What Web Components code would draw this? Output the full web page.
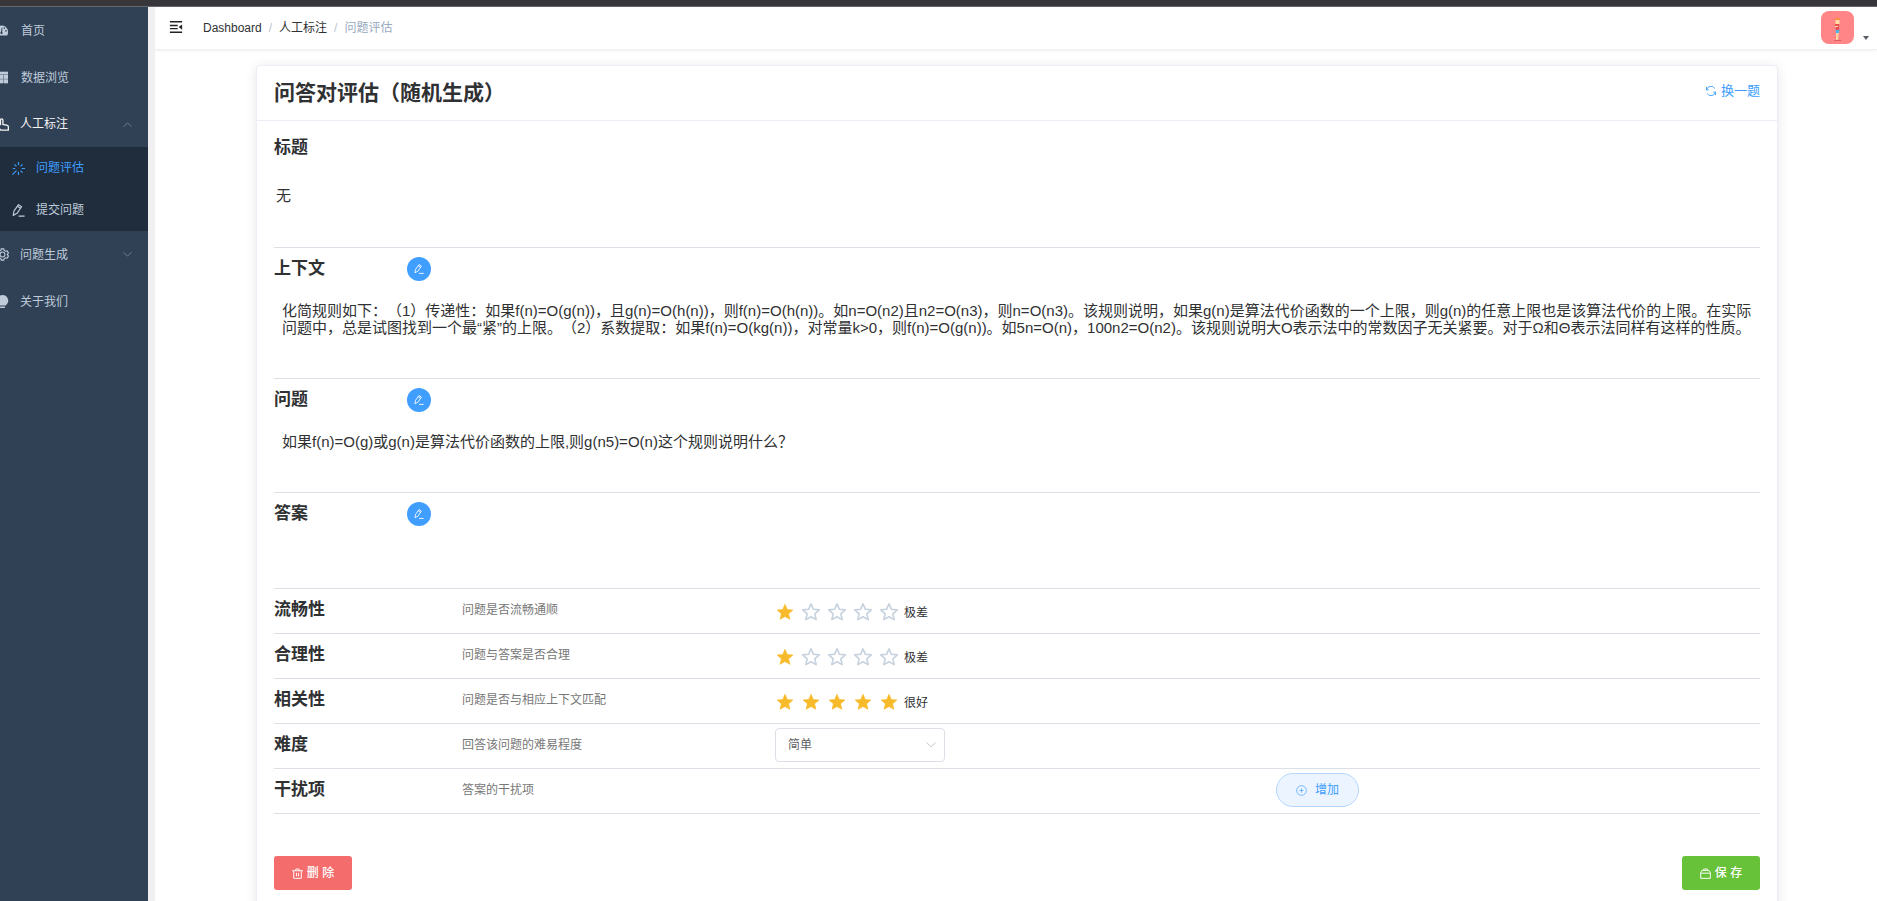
<!DOCTYPE html>
<html lang="zh-CN">
<head>
<meta charset="utf-8">
<title>问题评估</title>
<style>
html,body{margin:0;height:100%}
body{font:12px/16px "Liberation Sans","Noto Sans CJK SC",sans-serif;color:#303133;background:#fff;overflow:hidden}
</style>
</head>
<body>
<app-shell></app-shell>
<script>
const svg = (body, size) => `<svg width="${size}" height="${size}" viewBox="0 0 16 16" fill="none" stroke="currentColor" stroke-width="1" aria-hidden="true">${body}</svg>`;
const ICONS = {
  gauge: '<path fill="currentColor" stroke="none" fill-rule="evenodd" d="M8 2a8 8 0 0 0-7 12h14A8 8 0 0 0 8 2zM3 9.500a1 1 0 1 1 0-2 1 1 0 0 1 0 2zm2-3.500a1 1 0 1 1 0-2 1 1 0 0 1 0 2zm3 6.500a1.600 1.600 0 0 1-.6-3L8.200 4.500l1 .2-.4 5a1.600 1.600 0 0 1-.8 2.800zm3.500-6.500a1 1 0 1 1 0-2 1 1 0 0 1 0 2zm2 3.500a1 1 0 1 1 0-2 1 1 0 0 1 0 2z"/>',
  table: '<path fill="currentColor" stroke="none" fill-opacity=".45" d="M0 1h16v14H0z"/><path fill="currentColor" stroke="none" d="M0 1h16v3H0zM0 5h4.500v4.500H0zM5.500 5h4.500v4.500H5.500zM11 5h5v4.500h-5zM0 10.500h4.500V15H0zM5.500 10.500h4.500V15H5.500zM11 10.500h5V15h-5z"/>',
  hand: '<path stroke-width="1.600" d="M5.500 9V2.500a1.500 1.500 0 0 1 3 0V8l5.500 1.200c1 .3 1.200 1 1.200 2V15H6L2 10.500"/>',
  loading: '<path stroke-width="1.400" d="M8 0v4M8 12v4M1 8h3M12 8h4M3 3l2.500 2.500M10.500 10.500L13 13M13 3l-2.500 2.500M5.500 10.500L.5 15.500"/>',
  edit: '<path stroke-width="1.400" stroke-linejoin="round" d="M1.500 14l1-5.500L8 .8l3.800 2.600L6.200 11.500zM6.800 2.800l3.600 2.500M8 15h7.500"/>',
  gear: '<circle cx="8" cy="8" r="3" stroke-width="1.300"/><path stroke-width="1.400" d="M6.500 1h3l.6 2 1.700 1 2-.5 1.500 2.600L13.900 8l1.400 1.900-1.500 2.600-2-.5-1.700 1-.6 2h-3l-.6-2-1.700-1-2 .5L.7 9.900 2.100 8 .7 6.100l1.500-2.600 2 .5 1.700-1z"/>',
  bulb: '<path fill="currentColor" stroke="none" d="M8 0a7 7 0 0 0-4.200 12.600V13h8.400v-.4A7 7 0 0 0 8 0zM5 14h6v2H5z"/>',
  up: '<path stroke-width="1.300" d="M1 12l7-7 7 7"/>',
  down: '<path stroke-width="1.300" d="M1 4l7 7 7-7"/>',
  refresh: '<path stroke-width="1.200" d="M2 7a6 6 0 0 1 11-2.500M14 9a6 6 0 0 1-11 2.500M2 2.500v4h3M14 13.500v-4h-3"/>',
  plus: '<circle cx="8" cy="8" r="7"/><path d="M8 5v6M5 8h6"/>',
  trash: '<path stroke-width="1.400" d="M0 4h16M5.500 4V1.500h5V4M2.500 4v11h11V4M6.500 7v5M9.500 7v5"/>',
  box: '<path stroke-width="1.400" d="M4.500 3.500l1-2h5l1 2M3 3.500h10l2 3V15H1V6.500zM1 7.500h14"/>',
  fold: '<path stroke-width="1.600" d="M1 2h14M1 6.200h9M1 9.800h9M1 14h14"/><path fill="currentColor" stroke="none" d="M15 5v6l-4-3z"/>',
  starOn: '<path fill="#f7ba2a" stroke="#f7ba2a" stroke-width=".6" stroke-linejoin="round" d="M8 1.200l2 4.600 5 .5-3.800 3.300 1.100 4.900L8 12l-4.300 2.500 1.100-4.900L1 6.300l5-.5z"/>',
  starOff: '<path stroke="#c6d1de" stroke-width="1.400" stroke-linejoin="round" d="M8 .8l2.200 4.800 5.200.5-4 3.500 1.200 5.200L8 12.200l-4.600 2.600 1.200-5.200-4-3.500 5.200-.5z"/>'
};

const define = (name, css, render) => customElements.define(name, class extends HTMLElement {
  constructor() {
    super();
    this.attachShadow({ mode: 'open' });
  }
  connectedCallback() {
    this.shadowRoot.innerHTML = `<style>*{box-sizing:border-box}svg{display:block;flex:none}${css}</style>${render(this)}`;
  }
});

define('nav-item', `
:host{display:block}
a{display:flex;align-items:center;height:47px;padding-right:16px;color:#bfcbd9;text-decoration:none}
.icon{width:20px;display:flex;margin-left:-4px;margin-right:4px}
.chev{margin-left:auto;color:#8592a3}
:host([root]) .icon{margin-left:-5px;margin-right:6px}
:host([open]) a{color:#f4f4f5;height:46px}
:host([sub]) a{height:42px;padding-left:12px}
:host([sub]) .icon{margin-left:0}
:host([current]) a{color:#409eff}
`, el => `<a href="#"><span class="icon">${svg(ICONS[el.getAttribute('icon')], 13)}</span><slot></slot>${el.hasAttribute('chevron') ? `<span class="chev">${svg(ICONS[el.getAttribute('chevron')], 9)}</span>` : ''}</a>`);

define('side-bar', `
:host{display:block;background:#304156}
.sub{background:#1f2d3d}
`, () => `<nav>
<nav-item icon="gauge" root>首页</nav-item>
<nav-item icon="table" root>数据浏览</nav-item>
<nav-item icon="hand" chevron="up" open>人工标注</nav-item>
<div class="sub"><nav-item icon="loading" sub current>问题评估</nav-item><nav-item icon="edit" sub>提交问题</nav-item></div>
<nav-item icon="gear" chevron="down">问题生成</nav-item>
<nav-item icon="bulb">关于我们</nav-item></nav>`);

define('nav-bar', `
:host{display:flex;align-items:center;height:43px;padding:0 8px 0 14px;border-bottom:1px solid #f0f0f0;box-shadow:0 1px 3px rgba(0,21,41,.06)}
button{border:0;background:none;padding:0 0 2px;color:inherit}
.fold{color:#222;margin-right:20px}
ol{display:flex;list-style:none;margin:0;padding:0}
li+li::before{content:"/";color:#c0c4cc;margin:0 7px}
a{color:#303133;text-decoration:none}
li:last-child{color:#97a8be}
.user{margin-left:auto;display:flex;align-items:flex-end;gap:9px}
.caret{border:3px solid transparent;border-top:4px solid #5a5e66;border-bottom:0;margin-bottom:4px}
`, () => `<button class="fold" aria-label="收起菜单">${svg(ICONS.fold, 14)}</button>
<ol><li><a href="#">Dashboard</a></li><li><a href="#">人工标注</a></li><li>问题评估</li></ol>
<button class="user" aria-label="用户菜单"><svg width="33" height="33" viewBox="0 0 33 33" aria-hidden="true"><rect width="33" height="33" rx="8" fill="#ff8587"/><path d="M13 29h7v1h-7z" fill="#d95f63"/><path d="M15 21h3l-1 8h-2z" fill="#fbd0a0"/><path d="M14.500 18h4l-.5 4h-3z" fill="#4cb4e8"/><path d="M14 13h4v6h-3z" fill="#e84d50"/><path d="M14.500 8h4v5h-4z" fill="#ffdca8"/><path d="M14 8q2-3 5 0v1h-5z" fill="#f5923e"/><path d="M14 15h3v1h-3z" fill="#ffdca8"/></svg><span class="caret"></span></button>`);

define('text-section', `
:host{display:block;border-bottom:1px solid #dcdfe6;min-height:var(--h);padding-top:9px}
header{display:flex;align-items:center;height:24px}
h3{margin:0;font-size:17px;line-height:24px;width:133px}
button{width:24px;height:24px;border:0;border-radius:50%;background:#409eff;color:#fff;padding:0;display:grid;place-items:center}
div{margin-top:21px;padding:0 8px;font-size:15px;line-height:17px;text-spacing-trim:space-all}
:host([plain]) div{padding:0 2px;margin-top:27px}
`, el => `<header><h3>${el.getAttribute('label')}</h3>${el.hasAttribute('plain') ? '' : `<button aria-label="编辑${el.getAttribute('label')}">${svg(ICONS.edit, 10)}</button>`}</header><div><slot></slot></div>`);

define('score-row', `
:host{display:grid;grid-template-columns:188fr 313fr 985fr;height:45px;border-bottom:1px solid #dcdfe6;align-items:start}
h3{margin:0;font-size:17px;line-height:24px;padding-top:9px}
p{margin:0;color:#777;padding-top:13px}
`, el => `<h3>${el.getAttribute('label')}</h3><p>${el.getAttribute('hint')}</p><slot></slot>`);

define('star-rate', `
:host{display:flex;align-items:center;padding:13px 0 0 1px}
fieldset{display:flex;gap:8px;margin:0;border:0;padding:0}
label{display:block;height:18px}
input{appearance:none;position:absolute;margin:0;width:0;height:0}
output{margin-left:6px;padding-top:3px}
`, el => {
  const value = +el.getAttribute('value');
  return `<fieldset aria-label="${el.getAttribute('label')}">${[1,2,3,4,5].map(i => `<label><input type="radio" name="rate" aria-label="${i} 星" ${i === value ? 'checked' : ''}>${svg(i <= value ? ICONS.starOn : ICONS.starOff, 18)}</label>`).join('')}</fieldset><output><slot></slot></output>`;
});

define('level-select', `
:host{display:block;padding-top:4px}
label{display:grid;width:170px;align-items:center}
select,svg{grid-area:1/1}
select{appearance:none;width:100%;height:34px;border:1px solid #dcdfe6;border-radius:4px;background:#fff;padding:0 12px;font:inherit;color:#606266}
svg{justify-self:end;margin-right:9px;color:#b4b8c0;pointer-events:none}
`, () => `<label><select aria-label="难度"><option>简单</option><option>中等</option><option>困难</option></select>${svg(ICONS.down, 10)}</label>`);

define('ui-button', `
:host{display:block}
button{display:flex;align-items:center;justify-content:center;gap:4px;width:78px;height:34px;border:0;border-radius:3px;color:#fff;font:500 12px/16px "Liberation Sans","Noto Sans CJK SC",sans-serif;padding:0;background:var(--bg)}
:host([kind=add]) button{width:83px;gap:8px;border:1px solid #b3d8ff;border-radius:17px;color:#409eff;background:#ecf5ff;font-weight:400}
:host([kind=add]){padding-top:4px;margin-left:calc(100% * 501 / 985)}
`, el => `<button>${svg(ICONS[el.getAttribute('icon')], 11)}<slot></slot></button>`);

define('question-card', `
:host{display:block;border:1px solid #ebeef5;border-radius:4px;box-shadow:0 2px 12px rgba(0,0,0,.1);background:#fff}
.head{display:flex;align-items:center;justify-content:space-between;height:55px;padding:0 17px;border-bottom:1px solid #ebeef5}
h2{margin:0;font-size:21px;line-height:28px}
a{display:flex;align-items:center;gap:4px;padding-bottom:4px;font-size:13px;color:#409eff;text-decoration:none}
.body{padding:6px 17px 32px}
.foot{display:flex;justify-content:space-between;margin-top:42px}
`, () => `<div class="head"><h2>问答对评估（随机生成）</h2><a href="#">${svg(ICONS.refresh, 12)}换一题</a></div>
<div class="body">
<text-section label="标题" plain style="--h:121px">无</text-section>
<text-section label="上下文" style="--h:131px">化简规则如下：（1）传递性：如果f(n)=O(g(n))，且g(n)=O(h(n))，则f(n)=O(h(n))。如n=O(n2)且n2=O(n3)，则n=O(n3)。该规则说明，如果g(n)是算法代价函数的一个上限，则g(n)的任意上限也是该算法代价的上限。在实际问题中，总是试图找到一个最“紧”的上限。（2）系数提取：如果f(n)=O(kg(n))，对常量k&gt;0，则f(n)=O(g(n))。如5n=O(n)，100n2=O(n2)。该规则说明大O表示法中的常数因子无关紧要。对于Ω和Θ表示法同样有这样的性质。</text-section>
<text-section label="问题" style="--h:114px">如果f(n)=O(g)或g(n)是算法代价函数的上限,则g(n5)=O(n)这个规则说明什么？</text-section>
<text-section label="答案" style="--h:96px"></text-section>
<score-row label="流畅性" hint="问题是否流畅通顺"><star-rate label="流畅性" value="1">极差</star-rate></score-row>
<score-row label="合理性" hint="问题与答案是否合理"><star-rate label="合理性" value="1">极差</star-rate></score-row>
<score-row label="相关性" hint="问题是否与相应上下文匹配"><star-rate label="相关性" value="5">很好</star-rate></score-row>
<score-row label="难度" hint="回答该问题的难易程度"><level-select></level-select></score-row>
<score-row label="干扰项" hint="答案的干扰项"><ui-button kind="add" icon="plus">增加</ui-button></score-row>
<div class="foot"><ui-button icon="trash" style="--bg:#f56c6c">删 除</ui-button><ui-button icon="box" style="--bg:#67c23a">保 存</ui-button></div>
</div>`);

define('app-shell', `
:host{display:grid;grid-template:7px minmax(0,1fr)/148px 7px minmax(0,1fr);height:100vh}
.top{grid-column:1/-1;background:#37373b;border-bottom:1px solid #67676b}
.gap{background:#f0f0f0}
main{overflow-x:hidden;overflow-y:auto;scrollbar-width:none}
question-card{margin:15px 99px 0 101px}
`, () => `<div class="top"></div><side-bar></side-bar><div class="gap"></div><main><nav-bar></nav-bar><question-card></question-card></main>`);
</script>
</body>
</html>
